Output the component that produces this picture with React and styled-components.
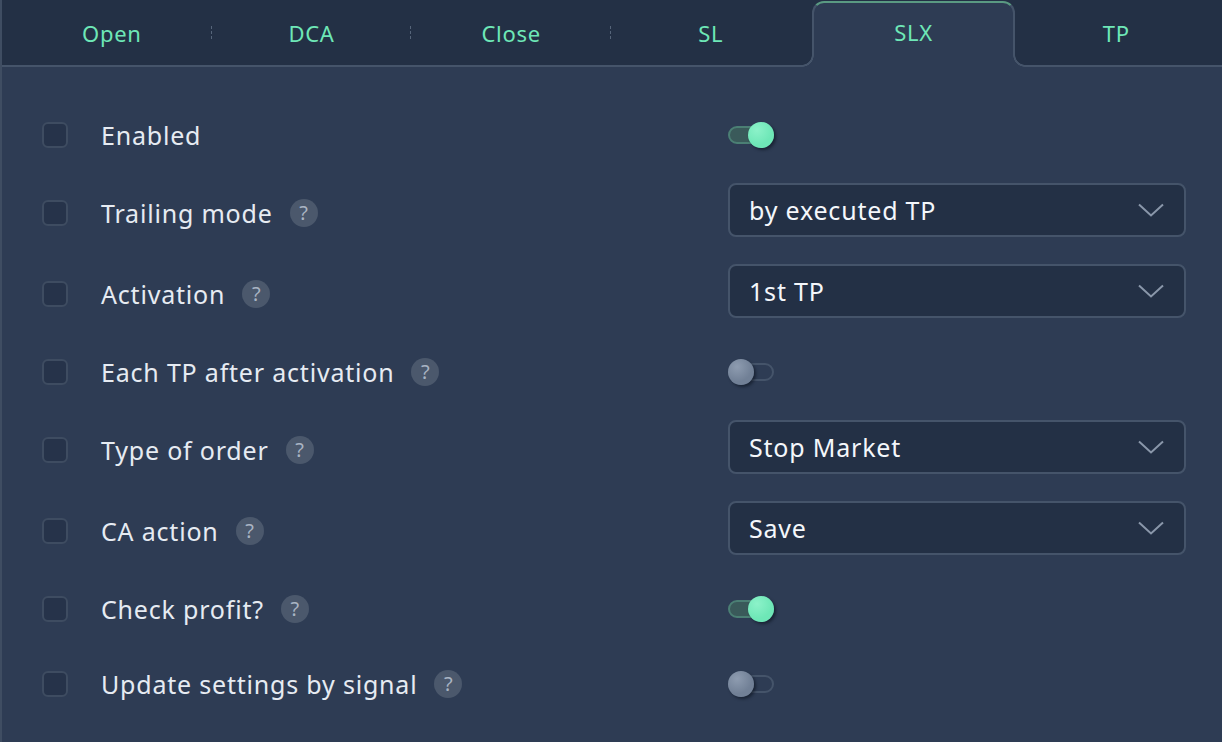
import React from "react";
import styled, { createGlobalStyle, css } from "styled-components";

const C = {
  bar: "#233045",
  panel: "#2e3c54",
  line: "#45546a",
  mint: "#6ee7b7",
  text: "#e6ebf2",
};

const Global = createGlobalStyle`
  html, body { margin: 0; padding: 0; background: ${C.panel}; }
  body { font-family: "Noto Sans", "Open Sans", sans-serif; }
  * { box-sizing: border-box; }
`;

const Panel = styled.div`
  width: 1222px;
  height: 742px;
  background: ${C.panel};
  border-left: 2px solid #3f4d62;
  overflow: hidden;
`;

const TabBar = styled.div`
  display: flex;
  height: 67px;
  padding: 0 6px 0 10px;
  background: ${C.bar};
  border-bottom: 2px solid ${C.line};
`;

const Tab = styled.div`
  position: relative;
  flex: 1;
  display: flex;
  align-items: center;
  justify-content: center;
  color: ${C.mint};
  font-size: 22px;
  letter-spacing: 0.7px;

  ${(p) =>
    p.$sep &&
    css`
      &::after {
        content: "";
        position: absolute;
        right: 0;
        top: 26px;
        width: 1px;
        height: 14px;
        background: repeating-linear-gradient(
          to bottom,
          #56657a 0 3px,
          transparent 3px 5px
        );
      }
    `}

  ${(p) =>
    p.$active &&
    css`
      margin: 1px 1px -2px;
      padding-bottom: 6px;
      background: ${C.panel};
      border: 2px solid ${C.line};
      border-top-color: #5a9a82;
      border-bottom: none;
      border-radius: 12px 12px 0 0;

      &::before,
      &::after {
        content: "";
        position: absolute;
        bottom: 0;
        width: 12px;
        height: 12px;
      }
      &::before {
        left: -12px;
        background: radial-gradient(
          circle at 0 0,
          transparent 9.5px,
          ${C.line} 10px,
          ${C.line} 11.5px,
          ${C.panel} 12px
        );
      }
      &::after {
        right: -12px;
        background: radial-gradient(
          circle at 100% 0,
          transparent 9.5px,
          ${C.line} 10px,
          ${C.line} 11.5px,
          ${C.panel} 12px
        );
      }
    `}
`;

const Body = styled.div`
  display: flex;
  flex-direction: column;
  gap: 25px;
  padding: 43px 36px 0 40px;
`;

const Row = styled.div`
  display: flex;
  align-items: center;
  height: ${(p) => (p.$tall ? 56 : 50)}px;
`;

const Left = styled.div`
  flex: 0 0 686px;
  display: flex;
  align-items: center;
`;

const Check = styled.div`
  width: 26px;
  height: 26px;
  border: 2px solid #3e4c61;
  background: #26334a;
  border-radius: 6px;
  margin-right: 33px;
`;

const Label = styled.span`
  color: ${C.text};
  font-size: 25px;
  letter-spacing: 0.8px;
  line-height: 30px;
`;

const Help = styled.span`
  display: inline-flex;
  align-items: center;
  justify-content: center;
  width: 28px;
  height: 28px;
  margin-left: 17px;
  border-radius: 50%;
  background: #4b586c;
  color: #a9b4c3;
  font-size: 20px;
  line-height: 1;
`;

const Track = styled.div`
  position: relative;
  width: 46px;
  height: 18px;
  border-radius: 9px;
  border: 2px solid ${(p) => (p.$on ? "#4b7f74" : "#45546a")};
  background: ${(p) => (p.$on ? "#3a5a5a" : "transparent")};
`;

const Knob = styled.div`
  position: absolute;
  top: -6px;
  ${(p) => (p.$on ? "right: -2px;" : "left: -2px;")}
  width: 26px;
  height: 26px;
  border-radius: 50%;
  background: ${(p) =>
    p.$on
      ? "radial-gradient(circle at 35% 30%, #8cf2c9, #6ee7b7 60%)"
      : "radial-gradient(circle at 35% 30%, #8e9cb0, #718096 60%)"};
  box-shadow: 2px 2px 3px rgba(10, 16, 28, 0.55);
`;

const Select = styled.div`
  flex: 1;
  height: 54px;
  margin-top: -6px;
  display: flex;
  align-items: center;
  justify-content: space-between;
  padding: 0 20px 0 19px;
  background: #233045;
  border: 2px solid ${C.line};
  border-radius: 8px;
  color: #f4f7fb;
  font-size: 25px;
  letter-spacing: 0.8px;
`;

const Chevron = () => (
  <svg width="26" height="14" viewBox="0 0 26 14" fill="none">
    <path d="M1 1.5 L13 12.5 L25 1.5" stroke="#8a97aa" strokeWidth="2" />
  </svg>
);

const Toggle = ({ on }) => (
  <Track $on={on}>
    <Knob $on={on} />
  </Track>
);

const tabs = ["Open", "DCA", "Close", "SL", "SLX", "TP"];

const rows = [
  { label: "Enabled", toggle: true },
  { label: "Trailing mode", help: true, select: "by executed TP" },
  { label: "Activation", help: true, select: "1st TP" },
  { label: "Each TP after activation", help: true, toggle: false },
  { label: "Type of order", help: true, select: "Stop Market" },
  { label: "CA action", help: true, select: "Save" },
  { label: "Check profit?", help: true, toggle: true },
  { label: "Update settings by signal", help: true, toggle: false },
];

export default function App() {
  return (
    <>
      <Global />
      <Panel>
        <TabBar>
          {tabs.map((t, i) => (
            <Tab key={t} $active={t === "SLX"} $sep={i < 3}>
              {t}
            </Tab>
          ))}
        </TabBar>
        <Body>
          {rows.map((r) => (
            <Row key={r.label} $tall={!!r.select}>
              <Left>
                <Check />
                <Label>{r.label}</Label>
                {r.help && <Help>?</Help>}
              </Left>
              {r.select ? (
                <Select>
                  {r.select}
                  <Chevron />
                </Select>
              ) : (
                <Toggle on={r.toggle} />
              )}
            </Row>
          ))}
        </Body>
      </Panel>
    </>
  );
}
